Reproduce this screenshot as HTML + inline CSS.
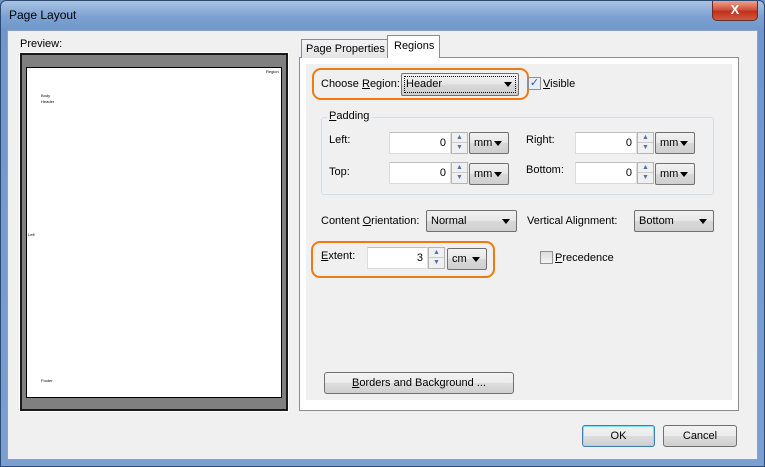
<!DOCTYPE html>
<html><head><style>
*{box-sizing:border-box;margin:0;padding:0}
body{width:765px;height:467px;overflow:hidden;font-family:"Liberation Sans",sans-serif;font-size:11px;color:#000;background:#6d93c8}
.abs{position:absolute;white-space:nowrap}
#win{position:absolute;left:0;top:0;width:765px;height:467px;background:linear-gradient(180deg,#a9c3e4 0,#7ea2d2 15px,#6f96cb 30px,#7aa0d2 100%);border:1px solid #2c4a72;border-radius:6px 6px 0 0}
#client{position:absolute;left:6px;top:29px;width:751px;height:430px;background:#f0f0f0;border:1px solid #8aa3c4}
.btn{position:absolute;border:1px solid #707070;border-radius:3px;background:linear-gradient(#f2f2f2,#ebebeb 50%,#dddddd 51%,#cfcfcf);text-align:center;white-space:nowrap}
.inp{position:absolute;background:#fff;border:1px solid #dcdcdc;border-top-color:#c0c0c0;text-align:right;padding-right:4px;line-height:20px}
.spin{position:absolute;width:17px;border:1px solid #b5b5b5;background:#f0f0f0}
.spin div{height:50%;border-bottom:1px solid #ccc;font-size:7px;color:#5670a8;text-align:center;line-height:9px}
.combo{position:absolute;border:1px solid #707070;border-radius:2px;background:linear-gradient(#f2f2f2,#e6e6e6 50%,#d8d8d8 51%,#cfcfcf);padding-left:4px;line-height:20px;white-space:nowrap}
.combo:after{content:"";position:absolute;right:6px;top:8px;border-left:4px solid transparent;border-right:4px solid transparent;border-top:5px solid #000}
.orange{position:absolute;border:2px solid #f07a12;border-radius:9px}
.tiny{position:absolute;font-size:4px}
</style></head><body>
<div id="win">
<div class="abs" style="left:8px;top:7px;font-size:12px;color:#000">Page Layout</div>
<div class="abs" style="left:711px;top:0;width:46px;height:20px;border:1px solid #6b2a25;border-top:none;border-radius:0 0 5px 5px;background:linear-gradient(#e8a393,#d0553f 45%,#c0301a 55%,#d45a3a);color:#fff;font-weight:bold;text-align:center;font-size:13px;line-height:18px">X</div>
<div id="client">
<div class="abs" style="left:12px;top:7px">Preview:</div>
<div class="abs" style="left:12px;top:22px;width:268px;height:358px;background:#808080;border:2px solid #1a1a1a;outline:1px solid #fff"></div>
<div class="abs" style="left:18px;top:36px;width:256px;height:331px;background:#fff;border:1px solid #000"></div>
<div class="tiny" style="left:258px;top:38px">Region</div>
<div class="tiny" style="left:33px;top:62px">Body</div>
<div class="tiny" style="left:33px;top:68px">Header</div>
<div class="tiny" style="left:20px;top:201px">Left</div>
<div class="tiny" style="left:33px;top:347px">Footer</div>

<div class="abs" style="left:291px;top:26px;width:440px;height:354px;background:#fff;border:1px solid #898c95"></div>
<div class="abs" style="left:298px;top:33px;width:426px;height:336px;background:#f0f0f0"></div>
<div class="abs" style="left:293px;top:8px;width:87px;height:19px;border:1px solid #898c95;border-bottom:none;background:linear-gradient(#f3f3f3,#e4e4e4);padding:3px 0 0 4px">Page Properties</div>
<div class="abs" style="left:379px;top:4px;width:53px;height:23px;border:1px solid #898c95;border-bottom:none;background:#fff;padding:4px 0 0 6px">Regions</div>

<div class="orange" style="left:304px;top:37px;width:217px;height:32px"></div>
<div class="abs" style="left:313px;top:47px">Choose <u>R</u>egion:</div>
<div class="combo" style="left:393px;top:42px;width:118px;height:23px;outline:1px dotted #000;outline-offset:-4px">Header</div>
<div class="abs" style="left:520px;top:46px;width:13px;height:13px;border:1px solid #8f8f8f;background:#e8eef8;color:#3a56a0;font-size:11px;line-height:11px;text-align:center">✓</div>
<div class="abs" style="left:535px;top:47px"><u>V</u>isible</div>

<div class="abs" style="left:313px;top:86px;width:393px;height:78px;border:1px solid #d5dfe5;border-radius:3px"></div>
<div class="abs" style="left:319px;top:79px;background:#f0f0f0;padding:0 2px"><u>P</u>adding</div>
<div class="abs" style="left:321px;top:103px">Left:</div>
<div class="inp" style="left:381px;top:101px;width:62px;height:22px">0</div>
<div class="spin" style="left:443px;top:101px;height:22px"><div>▲</div><div style="border:none">▼</div></div>
<div class="combo" style="left:461px;top:101px;width:40px;height:22px">mm</div>
<div class="abs" style="left:518px;top:103px">Right:</div>
<div class="inp" style="left:567px;top:101px;width:62px;height:22px">0</div>
<div class="spin" style="left:629px;top:101px;height:22px"><div>▲</div><div style="border:none">▼</div></div>
<div class="combo" style="left:647px;top:101px;width:40px;height:22px">mm</div>
<div class="abs" style="left:321px;top:135px">Top:</div>
<div class="inp" style="left:381px;top:131px;width:62px;height:22px">0</div>
<div class="spin" style="left:443px;top:131px;height:22px"><div>▲</div><div style="border:none">▼</div></div>
<div class="combo" style="left:461px;top:132px;width:40px;height:22px">mm</div>
<div class="abs" style="left:518px;top:133px">Bottom:</div>
<div class="inp" style="left:567px;top:131px;width:62px;height:22px">0</div>
<div class="spin" style="left:629px;top:131px;height:22px"><div>▲</div><div style="border:none">▼</div></div>
<div class="combo" style="left:647px;top:132px;width:40px;height:22px">mm</div>

<div class="abs" style="left:313px;top:184px">Content <u>O</u>rientation:</div>
<div class="combo" style="left:418px;top:179px;width:91px;height:22px">Normal</div>
<div class="abs" style="left:519px;top:184px">Vertical Alignment:</div>
<div class="combo" style="left:626px;top:179px;width:80px;height:22px">Bottom</div>

<div class="orange" style="left:303px;top:210px;width:184px;height:37px"></div>
<div class="abs" style="left:313px;top:219px"><u>E</u>xtent:</div>
<div class="inp" style="left:359px;top:216px;width:61px;height:22px">3</div>
<div class="spin" style="left:420px;top:216px;height:22px"><div>▲</div><div style="border:none">▼</div></div>
<div class="combo" style="left:439px;top:217px;width:40px;height:22px">cm</div>
<div class="abs" style="left:532px;top:220px;width:13px;height:13px;border:1px solid #8f8f8f;background:linear-gradient(#dcdcdc,#f4f4f4)"></div>
<div class="abs" style="left:547px;top:221px"><u>P</u>recedence</div>

<div class="btn" style="left:316px;top:341px;width:190px;height:22px;line-height:20px"><u>B</u>orders and Background ...</div>
<div class="btn" style="left:574px;top:394px;width:73px;height:22px;line-height:20px;border-color:#3c7fb1;box-shadow:inset 0 0 0 1px #7de3ff">OK</div>
<div class="btn" style="left:655px;top:394px;width:74px;height:22px;line-height:20px">Cancel</div>
</div>
</div>
</body></html>
